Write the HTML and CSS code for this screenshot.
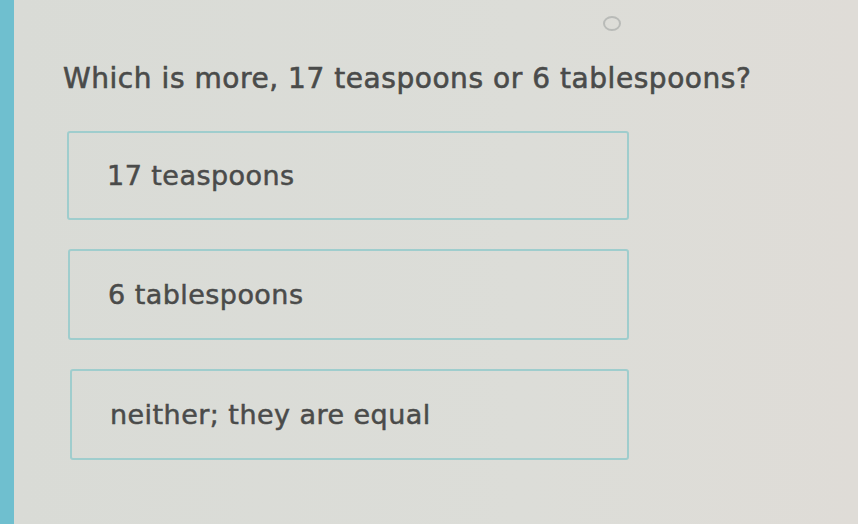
FILE: index.html
```html
<!DOCTYPE html>
<html>
<head>
<meta charset="utf-8">
<link rel="stylesheet" href="styles.css">
</head>
<body>
<div class="page">
  <div class="sidebar"></div>
  <main class="content">
    <div class="top"><span class="dot"></span></div>
    <h1 class="question">Which is more, 17 teaspoons or 6 tablespoons?</h1>
    <div class="options">
      <div class="option o1">17 teaspoons</div>
      <div class="option o2">6 tablespoons</div>
      <div class="option o3">neither; they are equal</div>
    </div>
  </main>
</div>
</body>
</html>
```

FILE: styles.css
```css
html, body {
  margin: 0;
  padding: 0;
  height: 100%;
}
body {
  background: #dcdcd7;
  font-family: "DejaVu Sans", Verdana, sans-serif;
  color: #4a4b4a;
}
.page {
  display: flex;
  height: 524px;
  overflow: hidden;
}
.sidebar {
  width: 14px;
  flex: none;
  background: #6fbfcf;
}
.content {
  flex: 1;
  padding-left: 49px;
  background: linear-gradient(90deg, #d9dbd6 0%, #dcddd8 60%, #dfdcd7 100%);
}
.top {
  height: 62px;
  position: relative;
}
.dot {
  position: absolute;
  left: 540px;
  top: 16px;
  width: 18px;
  height: 15px;
  border: 2px solid #b9bbb8;
  border-radius: 50%;
  box-sizing: border-box;
}
.question {
  margin: 0;
  font-size: 28px;
  font-weight: normal;
  line-height: 34px;
  height: 34px;
  letter-spacing: 0.55px;
  white-space: nowrap;
  -webkit-text-stroke: 0.6px #4a4b4a;
}
.options {
  display: flex;
  flex-direction: column;
  gap: 29px;
  margin-top: 35px;
  width: 562px;
  margin-left: 4px;
}
.option {
  height: 89px;
  box-sizing: border-box;
  border: 2px solid #9fcdcd;
  border-radius: 3px;
  display: flex;
  align-items: center;
  padding-left: 38px;
  font-size: 27px;
  letter-spacing: 0.45px;
  -webkit-text-stroke: 0.5px #4a4b4a;
}
.o2 { margin-left: 1px; width: 561px; height: 91px; }
.o3 { margin-left: 3px; width: 559px; height: 91px; }
```
